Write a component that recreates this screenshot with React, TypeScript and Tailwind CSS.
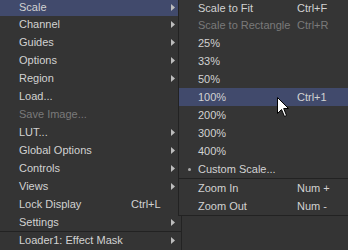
import React from "react";

type Item = {
  label?: string;
  shortcut?: string;
  sub?: boolean;
  disabled?: boolean;
  active?: boolean;
  bullet?: boolean;
  sep?: boolean;
  first?: boolean;
};

const mainItems: Item[] = [
  { label: "Scale", sub: true, active: true, first: true },
  { label: "Channel", sub: true },
  { label: "Guides", sub: true },
  { label: "Options", sub: true },
  { label: "Region", sub: true },
  { label: "Load..." },
  { label: "Save Image...", disabled: true },
  { label: "LUT...", sub: true },
  { label: "Global Options", sub: true },
  { label: "Controls", sub: true },
  { label: "Views", sub: true },
  { label: "Lock Display", shortcut: "Ctrl+L" },
  { label: "Settings", sub: true },
  { sep: true },
  { label: "Loader1: Effect Mask", sub: true },
];

const scaleItems: Item[] = [
  { label: "Scale to Fit", shortcut: "Ctrl+F", first: true },
  { label: "Scale to Rectangle", shortcut: "Ctrl+R", disabled: true },
  { label: "25%" },
  { label: "33%" },
  { label: "50%" },
  { label: "100%", shortcut: "Ctrl+1", active: true },
  { label: "200%" },
  { label: "300%" },
  { label: "400%" },
  { label: "Custom Scale...", bullet: true },
  { sep: true },
  { label: "Zoom In", shortcut: "Num +" },
  { label: "Zoom Out", shortcut: "Num -" },
];

function Arrow() {
  return (
    <svg width="4" height="7" viewBox="0 0 4 7" className="ml-auto mr-[6px] shrink-0">
      <path d="M0 0 L4 3.5 L0 7 Z" fill="#bdbdbd" />
    </svg>
  );
}

function Row({ item, labelWidth }: { item: Item; labelWidth: string }) {
  if (item.sep) return <div className="h-px bg-[#222222]" />;
  return (
    <div
      className={`flex items-center ${item.bullet ? "pl-[9px]" : "pl-[19px]"} ${
        item.first ? "h-[16px]" : "h-[18px]"
      } ${item.active ? "bg-[#414a6c]" : ""} ${item.disabled ? "text-[#7a7a7a]" : "text-[#d2d2d2]"}`}
    >
      {item.bullet && <span className="w-[3px] h-[3px] mr-[7px] rounded-full bg-[#aaaaaa]" />}
      <span className={`${labelWidth} whitespace-nowrap`}>{item.label}</span>
      {item.shortcut && <span className="whitespace-nowrap">{item.shortcut}</span>}
      {item.sub && <Arrow />}
    </div>
  );
}

function Cursor() {
  return (
    <svg width="13" height="21" viewBox="0 0 13 21" className="absolute left-[277px] top-[97px]">
      <path
        d="M0.5 0.5 L0.5 16.5 L4.5 12.5 L7.5 19.5 L9.5 18.5 L6.7 11.5 L11.5 11.5 Z"
        fill="#ffffff"
        stroke="#000000"
        strokeWidth="1"
      />
    </svg>
  );
}

export default function App() {
  return (
    <div
      className="relative w-[348px] h-[250px] overflow-hidden bg-[#343434] text-[11px] leading-none"
      style={{ fontFamily: '"Liberation Sans", Arial, sans-serif' }}
    >
      <div className="w-[182px] h-full border-r border-[#232323] flex flex-col">
        {mainItems.map((it, i) => (
          <Row key={i} item={it} labelWidth="w-[112px]" />
        ))}
      </div>

      {/* Scale submenu popup */}
      <div className="absolute left-[178px] top-0 w-[170px] bg-[#353535] border-l border-b border-[#222222] flex flex-col">
        {scaleItems.map((it, i) => (
          <Row key={i} item={it} labelWidth="w-[99px]" />
        ))}
      </div>

      <Cursor />
    </div>
  );
}
